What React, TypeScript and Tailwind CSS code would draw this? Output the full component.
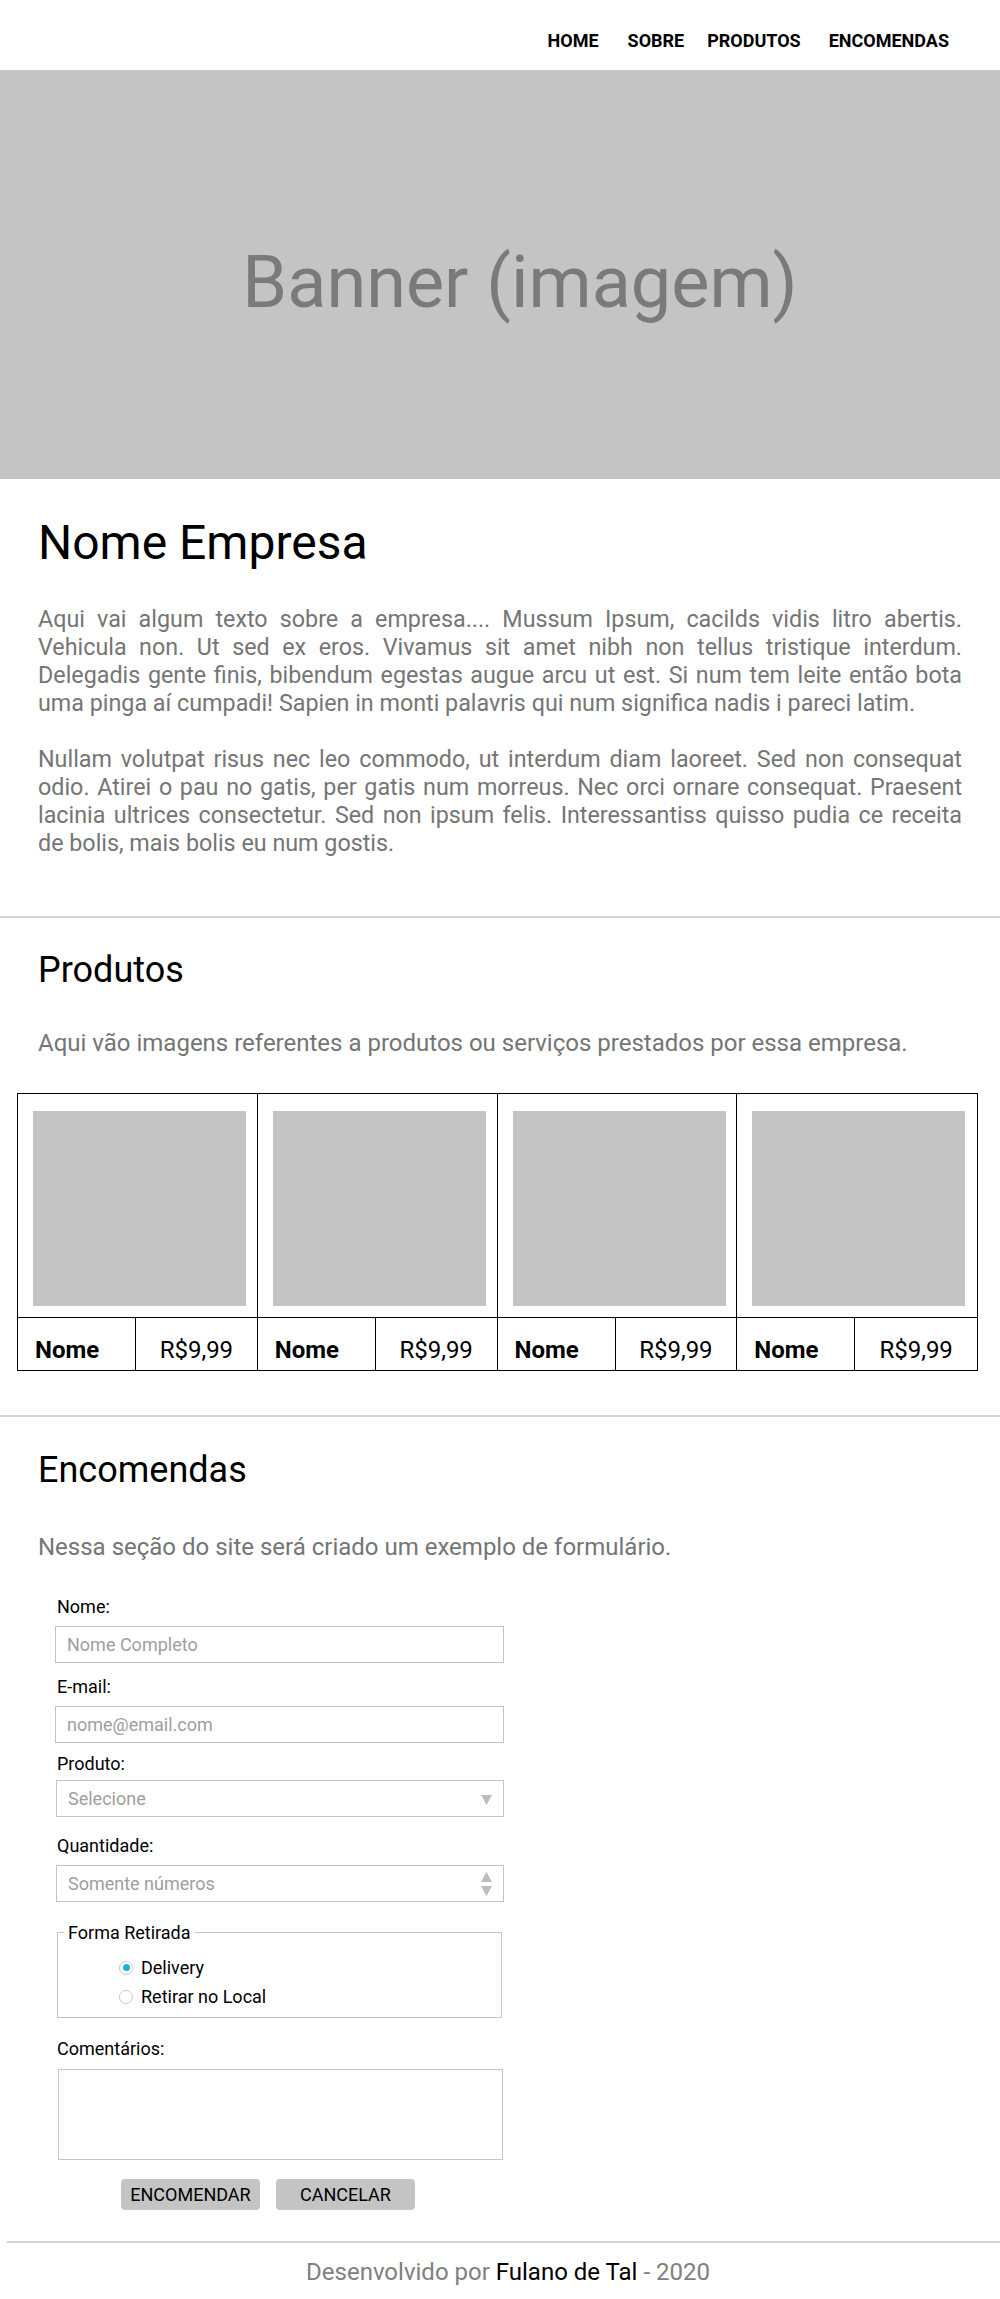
import React from "react";

const produtos = [1, 2, 3, 4];

function Label({ children, className = "" }: { children: React.ReactNode; className?: string }) {
  return <label className={`block ml-[2px] text-[18px] leading-[21px] text-black ${className}`}>{children}</label>;
}

function Field({ placeholder, className = "" }: { placeholder: string; className?: string }) {
  return (
    <input
      type="text"
      placeholder={placeholder}
      className={`block w-[449px] h-[37px] border border-[#c4c4c4] px-[11px] text-[18px] text-[#333] placeholder:text-[#9e9e9e] outline-none ${className}`}
    />
  );
}

export default function App() {
  return (
    <div className="w-[1000px] min-h-[2299px] bg-white font-[Roboto,sans-serif]">
      {/* Navbar */}
      <nav className="h-[70px] flex justify-end pr-[51px] pt-[30px] text-[18px] leading-[21px] font-bold text-black">
        <a href="#">HOME</a>
        <a href="#" className="ml-[29px]">SOBRE</a>
        <a href="#" className="ml-[23px]">PRODUTOS</a>
        <a href="#" className="ml-[28px]">ENCOMENDAS</a>
      </nav>

      {/* Banner */}
      <div className="h-[409px] bg-[#c4c4c4] flex items-center justify-center pt-[16px] pl-[40px]">
        <span className="text-[72px] leading-[84px] text-[#7a7a7a]">Banner (imagem)</span>
      </div>

      {/* Sobre */}
      <section className="px-[38px] pt-[36px] pb-[59px]">
        <h1 className="text-[48px] leading-[56px] text-black">Nome Empresa</h1>
        <p className="mt-[34px] text-[23.3px] leading-[28px] text-[#757575] text-justify">
          Aqui vai algum texto sobre a empresa.... Mussum Ipsum, cacilds vidis litro abertis. Vehicula non. Ut sed ex eros. Vivamus sit amet nibh non tellus tristique interdum. Delegadis gente finis, bibendum egestas augue arcu ut est. Si num tem leite então bota uma pinga aí cumpadi! Sapien in monti palavris qui num significa nadis i pareci latim.
        </p>
        <p className="mt-[28px] text-[23.3px] leading-[28px] text-[#757575] text-justify">
          Nullam volutpat risus nec leo commodo, ut interdum diam laoreet. Sed non consequat odio. Atirei o pau no gatis, per gatis num morreus. Nec orci ornare consequat. Praesent lacinia ultrices consectetur. Sed non ipsum felis. Interessantiss quisso pudia ce receita de bolis, mais bolis eu num gostis.
        </p>
      </section>

      <div className="h-[2px] bg-[#d2d2d2]" />

      {/* Produtos */}
      <section className="pt-[31px] pb-[44px]">
        <div className="px-[38px]">
          <h2 className="text-[36px] leading-[42px] text-black">Produtos</h2>
          <p className="mt-[38px] text-[24px] leading-[28px] text-[#757575]">
            Aqui vão imagens referentes a produtos ou serviços prestados por essa empresa.
          </p>
        </div>
        <div className="mt-[36px] ml-[17px] w-[961px] border border-black grid grid-cols-4">
          {produtos.map((p) => (
            <div key={p} className="flex flex-col border-r border-black last:border-r-0">
              <div className="pt-[17px] pb-[11px] pl-[15px]">
                <div className="w-[213px] h-[195px] bg-[#c4c4c4]" />
              </div>
              <div className="h-[53px] flex border-t border-black text-[24px] leading-[28px] text-black">
                <div className="w-[118px] border-r border-black pl-[17px] pt-[18px] font-bold">Nome</div>
                <div className="flex-1 text-center pt-[18px]">R$9,99</div>
              </div>
            </div>
          ))}
        </div>
      </section>

      <div className="h-[2px] bg-[#d2d2d2]" />

      {/* Encomendas */}
      <section className="pt-[32px]">
        <div className="px-[38px]">
          <h2 className="text-[36px] leading-[42px] text-black">Encomendas</h2>
          <p className="mt-[42px] text-[24px] leading-[28px] text-[#757575]">
            Nessa seção do site será criado um exemplo de formulário.
          </p>
        </div>

        <form className="mt-[35px] ml-[55px] w-[449px]">
          <Label>Nome:</Label>
          <Field placeholder="Nome Completo" className="mt-[9px]" />

          <Label className="mt-[13px]">E-mail:</Label>
          <Field placeholder="nome@email.com" className="mt-[9px]" />

          <Label className="mt-[10px]">Produto:</Label>
          <div className="relative mt-[6px] ml-[1px] w-[448px] h-[37px] border border-[#c4c4c4] flex items-center px-[11px] text-[18px] text-[#9e9e9e]">
            Selecione
            <svg className="absolute right-[11px] top-[14px]" width="11" height="10" viewBox="0 0 11 10">
              <path d="M0 0 H11 L5.5 10 Z" fill="#bdbdbd" />
            </svg>
          </div>

          <Label className="mt-[18px]">Quantidade:</Label>
          <div className="relative mt-[9px] ml-[1px] w-[448px] h-[37px] border border-[#c4c4c4] flex items-center px-[11px] text-[18px] text-[#9e9e9e]">
            Somente números
            <svg className="absolute right-[11px] top-[6px]" width="11" height="24" viewBox="0 0 11 24">
              <path d="M5.5 0 L11 10 H0 Z" fill="#bdbdbd" />
              <path d="M0 14 H11 L5.5 24 Z" fill="#bdbdbd" />
            </svg>
          </div>

          <fieldset className="mt-[20px] ml-[2px] w-[445px] border border-[#c4c4c4] pl-[6px] pb-[10px]">
            <legend className="px-[4px] text-[18px] leading-[21px] text-black">Forma Retirada</legend>
            <div className="pl-[55px] pt-[14px] flex flex-col gap-[8px] text-[18px] leading-[21px] text-black">
              <div className="flex items-center gap-[8px]">
                <span className="w-[14px] h-[14px] rounded-full border border-[#c8c8c8] flex items-center justify-center">
                  <span className="w-[7px] h-[7px] rounded-full bg-[#1ab3d7]" />
                </span>
                Delivery
              </div>
              <div className="flex items-center gap-[8px]">
                <span className="w-[14px] h-[14px] rounded-full border border-[#c8c8c8]" />
                Retirar no Local
              </div>
            </div>
          </fieldset>

          <Label className="mt-[20px]">Comentários:</Label>
          <textarea className="block mt-[10px] ml-[3px] w-[445px] h-[91px] border border-[#c4c4c4] resize-none outline-none" />

          <div className="mt-[19px] ml-[66px] flex gap-[16px]">
            <button type="button" className="w-[139px] h-[31px] rounded-[4px] bg-[#c4c4c4] text-[18px] text-black">ENCOMENDAR</button>
            <button type="button" className="w-[139px] h-[31px] rounded-[4px] bg-[#c4c4c4] text-[18px] text-black">CANCELAR</button>
          </div>
        </form>
      </section>

      {/* Footer */}
      <footer className="mt-[31px] pb-[15px]">
        <div className="ml-[7px] h-[2px] bg-[#d2d2d2]" />
        <p className="mt-[15px] pl-[16px] text-center text-[24px] leading-[28px] text-[#808080]">
          Desenvolvido por <span className="text-black">Fulano de Tal</span> - 2020
        </p>
      </footer>
    </div>
  );
}
